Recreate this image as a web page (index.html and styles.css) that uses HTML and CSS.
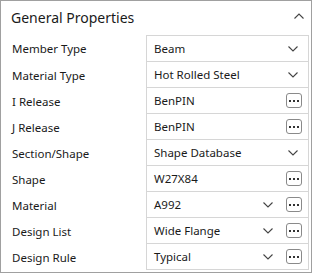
FILE: index.html
```html
<!DOCTYPE html>
<html lang="en">
<head>
    <meta charset="UTF-8">
    <title>General Properties</title>
    <link rel="stylesheet" href="styles.css">
</head>
<body>
    <div class="panel">
        <div class="panel-header">
            <span class="panel-title">General Properties</span>
            <svg class="collapse" width="10" height="6" viewBox="0 0 10 6"><path d="M0.5 5.5 L5 1 L9.5 5.5" fill="none" stroke="#444" stroke-width="1.1"/></svg>
        </div>
        <div class="props">
            <div class="row">
                <div class="label">Member Type</div>
                <div class="value"><span class="text">Beam</span><svg class="chev only" width="10" height="6" viewBox="0 0 10 6"><path d="M0.5 0.5 L5 5 L9.5 0.5" fill="none" stroke="#444" stroke-width="1.1"/></svg></div>
            </div>
            <div class="row">
                <div class="label">Material Type</div>
                <div class="value"><span class="text">Hot Rolled Steel</span><svg class="chev only" width="10" height="6" viewBox="0 0 10 6"><path d="M0.5 0.5 L5 5 L9.5 0.5" fill="none" stroke="#444" stroke-width="1.1"/></svg></div>
            </div>
            <div class="row">
                <div class="label">I Release</div>
                <div class="value"><span class="text">BenPIN</span><button class="more"><i></i><i></i><i></i></button></div>
            </div>
            <div class="row">
                <div class="label">J Release</div>
                <div class="value"><span class="text">BenPIN</span><button class="more"><i></i><i></i><i></i></button></div>
            </div>
            <div class="row">
                <div class="label">Section/Shape</div>
                <div class="value"><span class="text">Shape Database</span><svg class="chev only" width="10" height="6" viewBox="0 0 10 6"><path d="M0.5 0.5 L5 5 L9.5 0.5" fill="none" stroke="#444" stroke-width="1.1"/></svg></div>
            </div>
            <div class="row">
                <div class="label">Shape</div>
                <div class="value"><span class="text">W27X84</span><button class="more"><i></i><i></i><i></i></button></div>
            </div>
            <div class="row">
                <div class="label">Material</div>
                <div class="value"><span class="text">A992</span><svg class="chev" width="10" height="6" viewBox="0 0 10 6"><path d="M0.5 0.5 L5 5 L9.5 0.5" fill="none" stroke="#444" stroke-width="1.1"/></svg><button class="more"><i></i><i></i><i></i></button></div>
            </div>
            <div class="row">
                <div class="label">Design List</div>
                <div class="value"><span class="text">Wide Flange</span><svg class="chev" width="10" height="6" viewBox="0 0 10 6"><path d="M0.5 0.5 L5 5 L9.5 0.5" fill="none" stroke="#444" stroke-width="1.1"/></svg><button class="more"><i></i><i></i><i></i></button></div>
            </div>
            <div class="row">
                <div class="label">Design Rule</div>
                <div class="value"><span class="text">Typical</span><svg class="chev" width="10" height="6" viewBox="0 0 10 6"><path d="M0.5 0.5 L5 5 L9.5 0.5" fill="none" stroke="#444" stroke-width="1.1"/></svg><button class="more"><i></i><i></i><i></i></button></div>
            </div>
        </div>
    </div>
</body>
</html>
```

FILE: styles.css
```css
body {
    margin: 0;
    background: #fff;
    font-family: "Noto Sans", "Open Sans", sans-serif;
    color: #1a1a1a;
}
.panel {
    width: 312px;
    height: 273px;
    box-sizing: border-box;
    border: 1px solid #a0a0a0;
    padding-right: 2px;
}
.panel-header {
    height: 34px;
    display: flex;
    align-items: center;
    padding: 0 5px 0 10px;
}
.panel-title {
    flex: 1;
    font-size: 14px;
    font-weight: 400;
    margin-top: -2px;
}
.collapse {
    margin-top: -4px;
}
.row {
    display: grid;
    grid-template-columns: 145px 163px;
    font-size: 11.5px;
}
.label {
    padding-left: 11px;
    display: flex;
    align-items: center;
}
.value {
    height: 26px;
    box-sizing: border-box;
    border: 1px solid #d6d6d6;
    border-top: none;
    display: flex;
    align-items: center;
    padding: 0 6px 0 7px;
}
.row:first-child .value {
    height: 27px;
    border-top: 1px solid #d6d6d6;
}
.text {
    flex: 1;
}
.chev {
    margin-right: 13px;
}
.chev.only {
    margin-right: 4px;
}
.more {
    width: 16px;
    height: 15px;
    box-sizing: border-box;
    border: 1px solid #8a8a8a;
    border-radius: 3px;
    background: #fff;
    padding: 0;
    display: flex;
    align-items: center;
    justify-content: center;
    gap: 2px;
}
.more i {
    width: 2px;
    height: 2px;
    background: #333;
}
```
